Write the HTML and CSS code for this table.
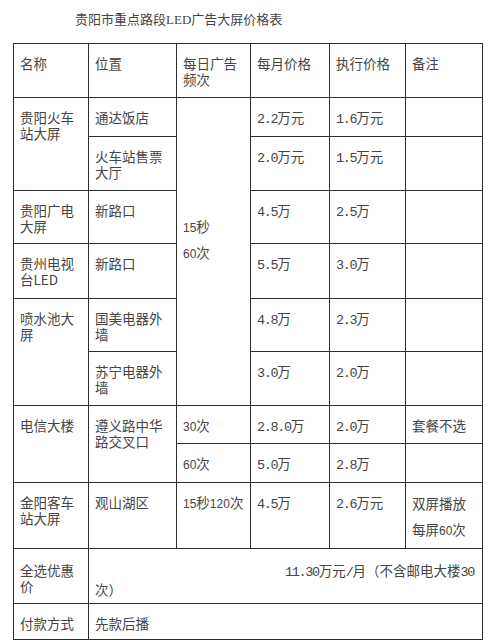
FILE: index.html
```html
<!DOCTYPE html>
<html lang="zh-CN">
<head>
<meta charset="utf-8">
<title>贵阳市重点路段LED广告大屏价格表</title>
<link rel="stylesheet" href="styles.css">
</head>
<body>
<div class="page">
  <h1 class="title">贵阳市重点路段<span class="lat">LED</span>广告大屏价格表</h1>
  <table class="price">
    <colgroup>
      <col class="c1"><col class="c2"><col class="c3"><col class="c4"><col class="c5"><col class="c6">
    </colgroup>
    <tr class="r-head">
      <td>名称</td><td>位置</td><td>每日广告频次</td><td>每月价格</td><td>执行价格</td><td>备注</td>
    </tr>
    <tr class="r-1a">
      <td rowspan="2">贵阳火车站大屏</td>
      <td>通达饭店</td>
      <td rowspan="6" class="freq">
        <span class="s">15</span>秒<br><span class="s">60</span>次
      </td>
      <td><span class="m">2.2</span>万元</td>
      <td><span class="m">1.6</span>万元</td>
      <td></td>
    </tr>
    <tr class="r-1b">
      <td>火车站售票大厅</td>
      <td><span class="m">2.0</span>万元</td>
      <td><span class="m">1.5</span>万元</td>
      <td></td>
    </tr>
    <tr class="r-2">
      <td>贵阳广电大屏</td>
      <td>新路口</td>
      <td><span class="m">4.5</span>万</td>
      <td><span class="m">2.5</span>万</td>
      <td></td>
    </tr>
    <tr class="r-3">
      <td class="tv">贵州电视台LED</td>
      <td>新路口</td>
      <td><span class="m">5.5</span>万</td>
      <td><span class="m">3.0</span>万</td>
      <td></td>
    </tr>
    <tr class="r-4a">
      <td rowspan="2">喷水池大屏</td>
      <td>国美电器外墙</td>
      <td><span class="m">4.8</span>万</td>
      <td><span class="m">2.3</span>万</td>
      <td></td>
    </tr>
    <tr class="r-4b">
      <td>苏宁电器外墙</td>
      <td><span class="m">3.0</span>万</td>
      <td><span class="m">2.0</span>万</td>
      <td></td>
    </tr>
    <tr class="r-5a">
      <td rowspan="2">电信大楼</td>
      <td rowspan="2">遵义路中华路交叉口</td>
      <td><span class="s">30</span>次</td>
      <td><span class="m">2.8.0</span>万</td>
      <td><span class="m">2.0</span>万</td>
      <td>套餐不选</td>
    </tr>
    <tr class="r-5b">
      <td><span class="s">60</span>次</td>
      <td><span class="m">5.0</span>万</td>
      <td><span class="m">2.8</span>万</td>
      <td></td>
    </tr>
    <tr class="r-6">
      <td>金阳客车站大屏</td>
      <td>观山湖区</td>
      <td class="nowrap"><span class="s">15</span>秒<span class="s">120</span>次</td>
      <td><span class="m">4.5</span>万</td>
      <td><span class="m">2.6</span>万元</td>
      <td class="dual">双屏播放<br>每屏<span class="s">60</span>次</td>
    </tr>
    <tr class="r-7">
      <td class="pad-7">全选优惠价</td>
      <td colspan="5" class="pad-7 total"><span class="first"><span class="m">11.30</span>万元<span class="m">/</span>月（不含邮电大楼<span class="m">30</span></span><br>次）</td>
    </tr>
    <tr class="r-8">
      <td>付款方式</td>
      <td colspan="5">先款后播</td>
    </tr>
  </table>
</div>
</body>
</html>
```

FILE: styles.css
```css
body {
  margin: 0;
  background: #ffffff;
  color: #454545;
  font-family: "Noto Sans CJK SC", "Noto Sans", sans-serif;
}

.page {
  padding: 11px 0 0 13px;
}

.title {
  margin: 0 0 15px 62px;
  font-size: 13px;
  font-weight: normal;
  line-height: 16px;
}

.lat {
  font-family: "Liberation Serif", "Noto Sans CJK SC", serif;
}

.price {
  border-collapse: collapse;
  table-layout: fixed;
  width: 470px;
  font-size: 13.5px;
  line-height: 16px;
}

.c1 { width: 75px; }
.c2 { width: 88px; }
.c3 { width: 74px; }
.c4 { width: 79px; }
.c5 { width: 76px; }
.c6 { width: 77px; }

.price td {
  border: 1px solid #2e2e2e;
  padding: 11px 6px 0 6px;
  vertical-align: top;
  overflow: hidden;
}

.price td.tv {
  word-break: break-all;
}

.r-head { height: 54px; }
.r-1a { height: 39px; }
.r-1b { height: 54px; }
.r-2 { height: 53px; }
.r-3 { height: 55px; }
.r-4a { height: 53px; }
.r-4b { height: 54px; }
.r-5a { height: 38px; }
.r-5b { height: 39px; }
.r-6 { height: 66px; }
.r-7 { height: 55px; }
.r-8 { height: 36px; }

.m {
  font-family: "Liberation Mono", "Noto Sans CJK SC", monospace;
  letter-spacing: -1.35px;
}

.s {
  font-family: "Liberation Sans", "Noto Sans CJK SC", sans-serif;
  font-size: 12px;
  line-height: 1;
}

.price td.freq {
  padding-top: 115px;
  line-height: 26px;
}

.price td.dual {
  padding-top: 7px;
  line-height: 26px;
}

.nowrap {
  white-space: nowrap;
}

.price td.pad-7 {
  padding-top: 13px;
}

.total .first {
  display: inline-block;
  padding-left: 190px;
  white-space: nowrap;
}
```
